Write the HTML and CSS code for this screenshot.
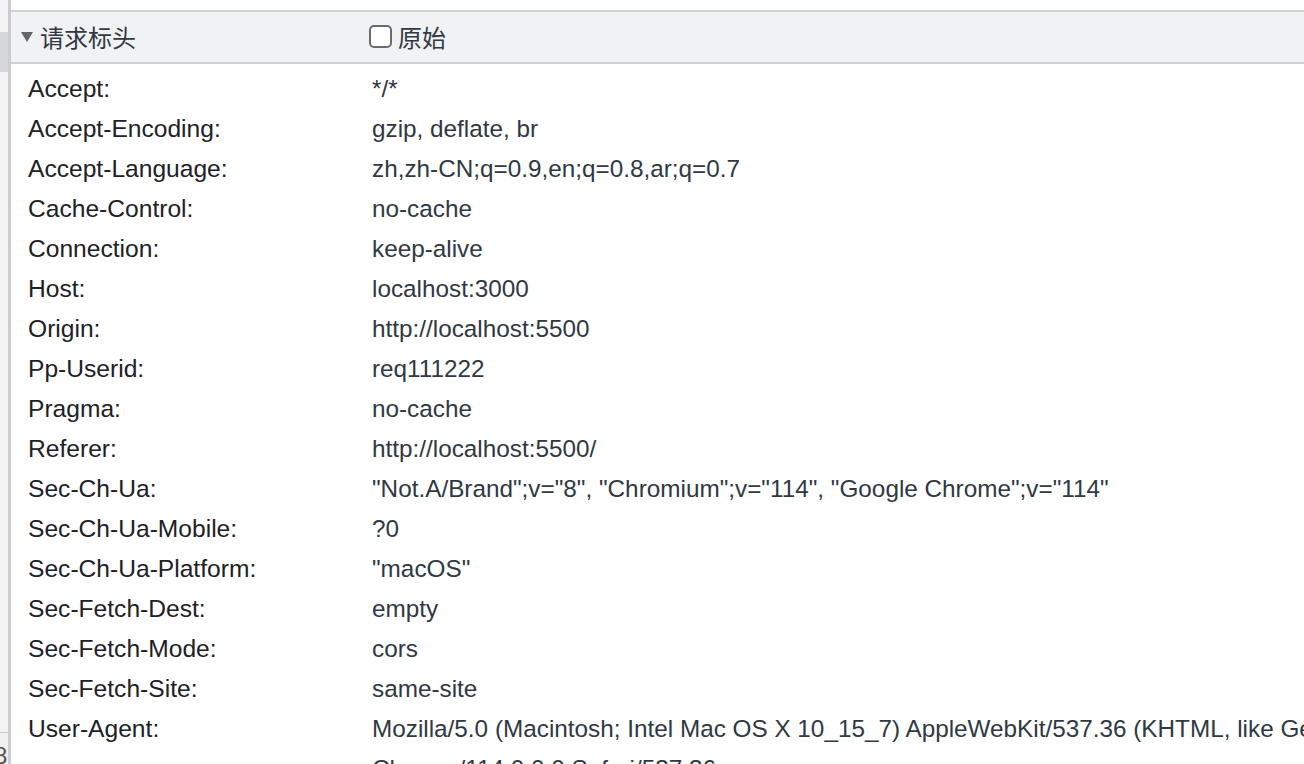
FILE: index.html
```html
<!DOCTYPE html>
<html lang="zh">
<head>
<meta charset="utf-8">
<title>请求标头</title>
<link rel="stylesheet" href="styles.css">
</head>
<body>
<div class="layout">
  <aside class="side">
    <div class="side-top"></div>
    <div class="side-sel"></div>
    <div class="side-fill"></div>
    <div class="side-bottom">8</div>
  </aside>
  <main class="panel">
    <div class="top-space"></div>
    <div class="section-head">
      <div class="title"><span class="tri"></span>请求标头</div>
      <label class="raw"><span class="box"></span>原始</label>
    </div>
    <div class="rows">
      <div class="row"><div class="k">Accept:</div><div class="v">*/*</div></div>
      <div class="row"><div class="k">Accept-Encoding:</div><div class="v">gzip, deflate, br</div></div>
      <div class="row"><div class="k">Accept-Language:</div><div class="v">zh,zh-CN;q=0.9,en;q=0.8,ar;q=0.7</div></div>
      <div class="row"><div class="k">Cache-Control:</div><div class="v">no-cache</div></div>
      <div class="row"><div class="k">Connection:</div><div class="v">keep-alive</div></div>
      <div class="row"><div class="k">Host:</div><div class="v">localhost:3000</div></div>
      <div class="row"><div class="k">Origin:</div><div class="v">http://localhost:5500</div></div>
      <div class="row"><div class="k">Pp-Userid:</div><div class="v">req111222</div></div>
      <div class="row"><div class="k">Pragma:</div><div class="v">no-cache</div></div>
      <div class="row"><div class="k">Referer:</div><div class="v">http://localhost:5500/</div></div>
      <div class="row"><div class="k">Sec-Ch-Ua:</div><div class="v">"Not.A/Brand";v="8", "Chromium";v="114", "Google Chrome";v="114"</div></div>
      <div class="row"><div class="k">Sec-Ch-Ua-Mobile:</div><div class="v">?0</div></div>
      <div class="row"><div class="k">Sec-Ch-Ua-Platform:</div><div class="v">"macOS"</div></div>
      <div class="row"><div class="k">Sec-Fetch-Dest:</div><div class="v">empty</div></div>
      <div class="row"><div class="k">Sec-Fetch-Mode:</div><div class="v">cors</div></div>
      <div class="row"><div class="k">Sec-Fetch-Site:</div><div class="v">same-site</div></div>
      <div class="row"><div class="k">User-Agent:</div><div class="v wrap">Mozilla/5.0 (Macintosh; Intel Mac OS X 10_15_7) AppleWebKit/537.36 (KHTML, like Gecko) Chrome/114.0.0.0 Safari/537.36</div></div>
    </div>
  </main>
</div>
</body>
</html>
```
FILE: styles.css
```css
html, body {
  margin: 0;
  padding: 0;
  width: 1304px;
  height: 764px;
  overflow: hidden;
  background: #ffffff;
  font-family: "Liberation Sans", Arial, "Noto Sans CJK SC", sans-serif;
  color: #202124;
}

.layout {
  display: flex;
  height: 764px;
}

.side {
  width: 8px;
  flex: none;
  display: flex;
  flex-direction: column;
  background: #f3f3f3;
  border-right: 3px solid #cdcdd1;
  overflow: hidden;
}

.side-top { height: 32px; }
.side-sel { height: 40px; background: #d5d7db; }
.side-fill { flex: 1; }
.side-bottom {
  height: 31px;
  border-top: 1px solid #c9c9cc;
  background: #f1f1f1;
  font-size: 24px;
  line-height: 46px;
  color: #555;
  text-indent: -6px;
}

.panel {
  flex: 1;
  min-width: 0;
  overflow: hidden;
}

.top-space {
  height: 10px;
  border-bottom: 2px solid #cfd0d3;
}

.section-head {
  height: 50px;
  background: #f1f2f4;
  border-bottom: 2px solid #cfd0d3;
  display: flex;
  align-items: center;
  font-size: 24px;
  color: #303942;
}

.title {
  width: 348px;
  padding-left: 10px;
  display: flex;
  align-items: center;
  position: relative;
  top: -1px;
}

.tri {
  width: 0;
  height: 0;
  border-left: 6.5px solid transparent;
  border-right: 6.5px solid transparent;
  border-top: 10px solid #626468;
  margin-right: 7px;
  position: relative;
  top: 1px;
}

.raw {
  display: flex;
  align-items: center;
  position: relative;
  top: -1px;
}

.box {
  width: 19px;
  height: 19px;
  border: 2px solid #6b6b6b;
  border-radius: 5px;
  background: #fff;
  margin-right: 6px;
}

.rows {
  padding-top: 5px;
}

.row {
  display: flex;
  height: 40px;
  align-items: center;
  font-size: 24.6px;
  line-height: 36px;
}

.k {
  width: 344px;
  flex: none;
  padding-left: 17px;
  color: #202124;
}

.v {
  flex: none;
  white-space: nowrap;
  color: #303942;
  font-size: 24.3px;
}

.v.wrap {
  white-space: normal;
  width: 1010px;
  align-self: flex-start;
  line-height: 40px;
}
```
